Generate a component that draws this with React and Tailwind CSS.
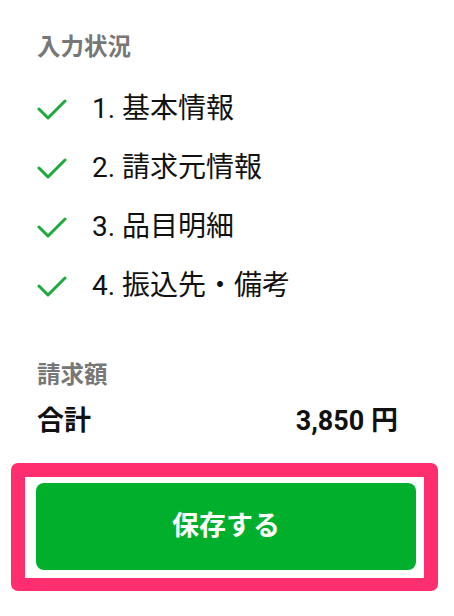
import React from 'react';

const steps = ['1. 基本情報', '2. 請求元情報', '3. 品目明細', '4. 振込先・備考'];

const CheckIcon = () => (
  <svg width="30" height="22" viewBox="0 0 30 22" fill="none" className="shrink-0">
    <polyline
      points="2,11 11,20 28,3"
      stroke="#1BAA3C"
      strokeWidth="3"
      strokeLinecap="round"
      strokeLinejoin="round"
    />
  </svg>
);

const App = () => {
  return (
    <div
      className="w-[454px] h-[616px] bg-white flex flex-col"
      style={{ fontFamily: "Roboto, 'Noto Sans CJK JP', sans-serif" }}
    >
      {/* 入力状況 */}
      <div className="pl-[37px] pt-[31px]">
        <h2 className="h-[32px] leading-[32px] text-[23.5px] font-bold text-[#777777]">入力状況</h2>
        <ul className="mt-[16px]">
          {steps.map((s) => (
            <li key={s} className="h-[59px] flex items-center">
              <CheckIcon />
              <span className="ml-[25px] text-[28px] text-[#111111] leading-none">{s}</span>
            </li>
          ))}
        </ul>
      </div>

      {/* 請求額 */}
      <div className="pl-[37px] pr-[56px] mt-[44px]">
        <h2 className="h-[32px] leading-[32px] text-[23.5px] font-bold text-[#777777]">請求額</h2>
        <div className="mt-[12px] h-[36px] flex items-center justify-between text-[27px] font-bold text-[#111111]">
          <span>合計</span>
          <span>3,850 円</span>
        </div>
      </div>

      {/* 保存 */}
      <div className="mt-[24px] pl-[11px]">
        <div className="w-[427px] border-[14px] border-b-[13px] border-[#FF2E6E] rounded-[7px] pl-[11px] pr-[8px] pt-[6px] pb-[8px]">
          <button
            type="button"
            className="w-full h-[87px] rounded-[8px] bg-[#00B02C] text-white text-[27px] font-bold"
          >
            保存する
          </button>
        </div>
      </div>
    </div>
  );
};

export default App;
